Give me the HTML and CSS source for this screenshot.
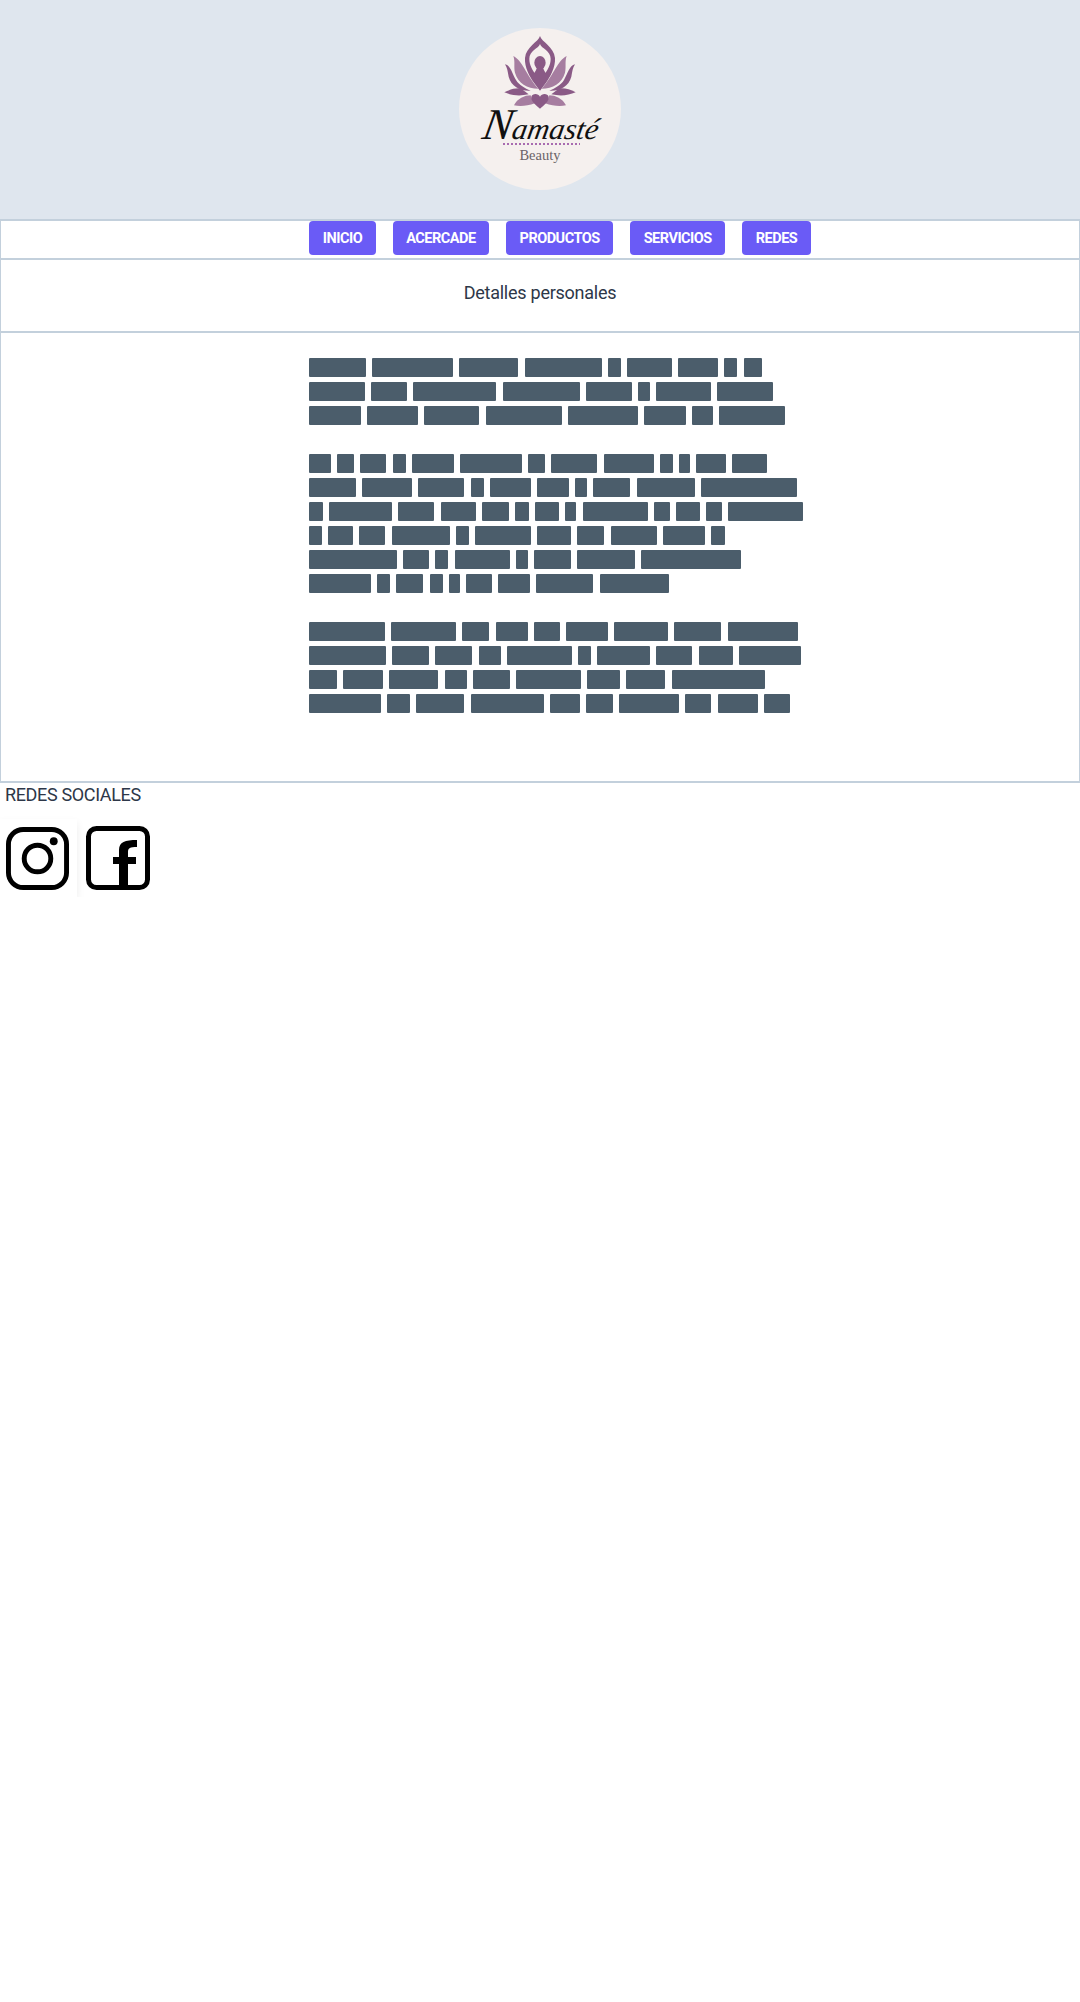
FILE: index.html
```html
<!DOCTYPE html>
<html lang="es">
  <head>
    <meta charset="UTF-8" />
    <meta name="viewport" content="width=device-width, initial-scale=1.0" />
    <title>Namasté Beauty</title>
    <link rel="stylesheet" href="styles.css">
  </head>
  <body>
    <header class="top_head">
      <svg class="logo" viewBox="0 0 162 162" role="img" aria-label="Namasté Beauty">
        <defs>
          <g id="half_lotus">
            <path class="petal_light" d="M70 78C98 92 106 132 145 176C112 176 84 160 75 128C71 110 76 94 70 78Z"/>
            <path class="petal_dark" d="M45 103C62 106 66 130 78 150C88 166 104 174 122 182C92 184 64 170 56 140C53 124 52 114 45 103Z"/>
            <path class="petal_dark" d="M43 187C60 178 80 173 94 176L116 193C90 199 65 197 43 187Z"/>
            <path class="petal_light" d="M72 226C82 206 104 196 122 196C124 206 128 214 135 220C112 228 90 230 72 226Z"/>
          </g>
        </defs>
        <circle class="logo_bg" cx="81" cy="81" r="81"/>
        <g transform="translate(31 2) scale(.3333)">
          <use href="#half_lotus"/>
          <use href="#half_lotus" transform="matrix(-1 0 0 1 300 0)"/>
          <path class="petal_dark" d="M150 18C155 36 192 50 195 84C197 112 180 142 168 158L150 182L132 158C120 142 103 112 105 84C108 50 145 36 150 18Z"/>
          <path class="logo_bg" d="M150 42C145 56 118 62 118 86C118 106 128 120 137 134L163 134C172 120 182 106 182 86C182 62 155 56 150 42Z"/>
          <ellipse class="petal_dark" cx="150" cy="98" rx="17" ry="20"/>
          <path class="petal_dark" d="M141 108H159C159 120 167 128 174 138H126C133 128 141 120 141 108Z"/>
          <path class="petal_dark" d="M150 236C140 227 121 213 124 200C127 189 145 189 150 200C155 189 173 189 176 200C179 213 160 227 150 236Z"/>
        </g>
        <text class="logo_name" transform="translate(22 111) skewX(-10)" textLength="116" lengthAdjust="spacingAndGlyphs"><tspan class="logo_cap">N</tspan>amasté</text>
        <line class="logo_dots" x1="44" y1="116" x2="121" y2="116"/>
        <text class="logo_sub" x="81" y="132" text-anchor="middle">Beauty</text>
      </svg>
    </header>

    <nav class="box top_menu">
      <a href="#inicio">INICIO</a>
      <a href="#acerca">ACERCADE</a>
      <a href="#productos">PRODUCTOS</a>
      <a href="#servicios">SERVICIOS</a>
      <a href="#redes">REDES</a>
    </nav>

    <section class="box title_box">
      <h1>Detalles personales</h1>
    </section>

    <section class="box text_box">
      <p>
        <span class="line"><i style="width:57px"></i><i style="width:81px"></i><i style="width:59px"></i><i style="width:77px"></i><i style="width:13px"></i><i style="width:45px"></i><i style="width:40px"></i><i style="width:13px"></i><i style="width:18px"></i></span>
        <span class="line"><i style="width:56px"></i><i style="width:36px"></i><i style="width:83px"></i><i style="width:77px"></i><i style="width:46px"></i><i style="width:12px"></i><i style="width:55px"></i><i style="width:56px"></i></span>
        <span class="line"><i style="width:52px"></i><i style="width:51px"></i><i style="width:55px"></i><i style="width:76px"></i><i style="width:70px"></i><i style="width:42px"></i><i style="width:21px"></i><i style="width:66px"></i></span>
      </p>
      <p>
        <span class="line"><i style="width:22px"></i><i style="width:17px"></i><i style="width:26px"></i><i style="width:13px"></i><i style="width:42px"></i><i style="width:62px"></i><i style="width:17px"></i><i style="width:46px"></i><i style="width:50px"></i><i style="width:13px"></i><i style="width:11px"></i><i style="width:30px"></i><i style="width:35px"></i></span>
        <span class="line"><i style="width:47px"></i><i style="width:50px"></i><i style="width:46px"></i><i style="width:13px"></i><i style="width:41px"></i><i style="width:32px"></i><i style="width:12px"></i><i style="width:37px"></i><i style="width:58px"></i><i style="width:96px"></i></span>
        <span class="line"><i style="width:14px"></i><i style="width:63px"></i><i style="width:36px"></i><i style="width:35px"></i><i style="width:27px"></i><i style="width:14px"></i><i style="width:24px"></i><i style="width:11px"></i><i style="width:65px"></i><i style="width:16px"></i><i style="width:24px"></i><i style="width:16px"></i><i style="width:75px"></i></span>
        <span class="line"><i style="width:13px"></i><i style="width:25px"></i><i style="width:26px"></i><i style="width:58px"></i><i style="width:13px"></i><i style="width:56px"></i><i style="width:34px"></i><i style="width:27px"></i><i style="width:46px"></i><i style="width:42px"></i><i style="width:14px"></i></span>
        <span class="line"><i style="width:88px"></i><i style="width:26px"></i><i style="width:13px"></i><i style="width:55px"></i><i style="width:12px"></i><i style="width:37px"></i><i style="width:58px"></i><i style="width:100px"></i></span>
        <span class="line"><i style="width:62px"></i><i style="width:13px"></i><i style="width:27px"></i><i style="width:13px"></i><i style="width:11px"></i><i style="width:26px"></i><i style="width:32px"></i><i style="width:57px"></i><i style="width:69px"></i></span>
      </p>
      <p>
        <span class="line"><i style="width:76px"></i><i style="width:65px"></i><i style="width:27px"></i><i style="width:32px"></i><i style="width:26px"></i><i style="width:42px"></i><i style="width:54px"></i><i style="width:47px"></i><i style="width:70px"></i></span>
        <span class="line"><i style="width:77px"></i><i style="width:37px"></i><i style="width:37px"></i><i style="width:22px"></i><i style="width:65px"></i><i style="width:13px"></i><i style="width:53px"></i><i style="width:36px"></i><i style="width:34px"></i><i style="width:62px"></i></span>
        <span class="line"><i style="width:28px"></i><i style="width:40px"></i><i style="width:49px"></i><i style="width:22px"></i><i style="width:37px"></i><i style="width:65px"></i><i style="width:33px"></i><i style="width:39px"></i><i style="width:93px"></i></span>
        <span class="line"><i style="width:72px"></i><i style="width:23px"></i><i style="width:48px"></i><i style="width:73px"></i><i style="width:30px"></i><i style="width:27px"></i><i style="width:60px"></i><i style="width:26px"></i><i style="width:40px"></i><i style="width:26px"></i></span>
      </p>
    </section>

    <footer class="social">
      <h2>REDES SOCIALES</h2>
      <div class="social_list">
        <a href="#instagram" class="social_card" aria-label="Instagram">
          <svg class="social_ico" viewBox="0 0 64 64">
            <rect x="2.5" y="2.5" width="59" height="59" rx="15" fill="none" stroke="#000" stroke-width="5"/>
            <circle cx="32" cy="32" r="13.5" fill="none" stroke="#000" stroke-width="5"/>
            <circle cx="48.500" cy="14.500" r="4" fill="#000"/>
          </svg>
        </a>
        <a href="#facebook" class="social_link" aria-label="Facebook">
          <svg class="social_ico" viewBox="0 0 64 64">
            <rect x="2.5" y="2.5" width="59" height="59" rx="8" fill="none" stroke="#000" stroke-width="5"/>
            <path d="M33 62V24C33 16 39 14 51 14V21C44 21 42 22 42 26V62Z"/>
            <rect x="27" y="31" width="23" height="7"/>
          </svg>
        </a>
      </div>
    </footer>
  </body>
</html>
```

FILE: styles.css
```css
* {
  margin: 0;
  padding: 0;
  box-sizing: border-box;
}
body {
  font-family: Roboto, "Noto Sans", sans-serif;
  color: #2d3748;
  background-color: white;
}
.top_head {
  height: 219px;
  display: flex;
  justify-content: center;
  padding-top: 28px;
  background-color: #dfe6ee;
}
.logo {
  width: 162px;
  height: 162px;
}
.logo_bg {
  fill: #f5f0ee;
}
.petal_dark {
  fill: #8a5a86;
}
.petal_light {
  fill: #a67da0;
}
.logo_name {
  font-family: "Liberation Serif", serif;
  font-style: italic;
  font-size: 30px;
  fill: #111;
}
.logo_cap {
  font-size: 44px;
}
.logo_dots {
  stroke: #a86bb0;
  stroke-width: 2;
  stroke-dasharray: 2 2;
}
.logo_sub {
  font-family: "Liberation Serif", serif;
  font-size: 14.5px;
  fill: #6b6368;
}
.box {
  border: solid #c3d0dc;
  border-width: 2px 1px 0;
}
.top_menu {
  height: 39px;
  display: flex;
  justify-content: center;
  gap: 17px;
  padding-left: 40px;
}
.top_menu a {
  height: 34px;
  line-height: 36px;
  padding: 0 13.5px;
  font-size: 14.5px;
  font-weight: 700;
  letter-spacing: -0.5px;
  text-decoration: none;
  color: white;
  background-color: #6a5bf6;
  border-radius: 4px;
}
.title_box {
  height: 73px;
  padding-top: 22px;
  text-align: center;
}
.title_box h1 {
  font-size: 18px;
  font-weight: 400;
  line-height: 22px;
  letter-spacing: -0.25px;
}
.text_box {
  padding: 25px 0 68px 308px;
  border-bottom-width: 2px;
}
.text_box p {
  margin-bottom: 29px;
}
.text_box p:last-child {
  margin-bottom: 0;
}
.line {
  display: flex;
  gap: 6.2px;
  margin-bottom: 5px;
}
.line:last-child {
  margin-bottom: 0;
}
.line i {
  display: block;
  height: 19px;
  background-color: #4b5d6b;
  border-radius: 1px;
}
.social h2 {
  padding: 1px 0 0 5px;
  font-size: 18px;
  font-weight: 400;
  line-height: 22px;
  letter-spacing: -0.35px;
}
.social_list {
  display: flex;
  align-items: flex-start;
  margin-top: 13px;
}
.social_card {
  display: block;
  width: 77px;
  height: 78px;
  padding: 8px 0 0 6px;
  background-color: white;
  box-shadow: 0 4px 8px rgba(0, 0, 0, 0.08);
}
.social_link {
  display: block;
  margin: 7px 0 0 9px;
}
.social_ico {
  display: block;
  width: 64px;
  height: 64px;
}
.social_card .social_ico {
  width: 63px;
  height: 63px;
}
```
